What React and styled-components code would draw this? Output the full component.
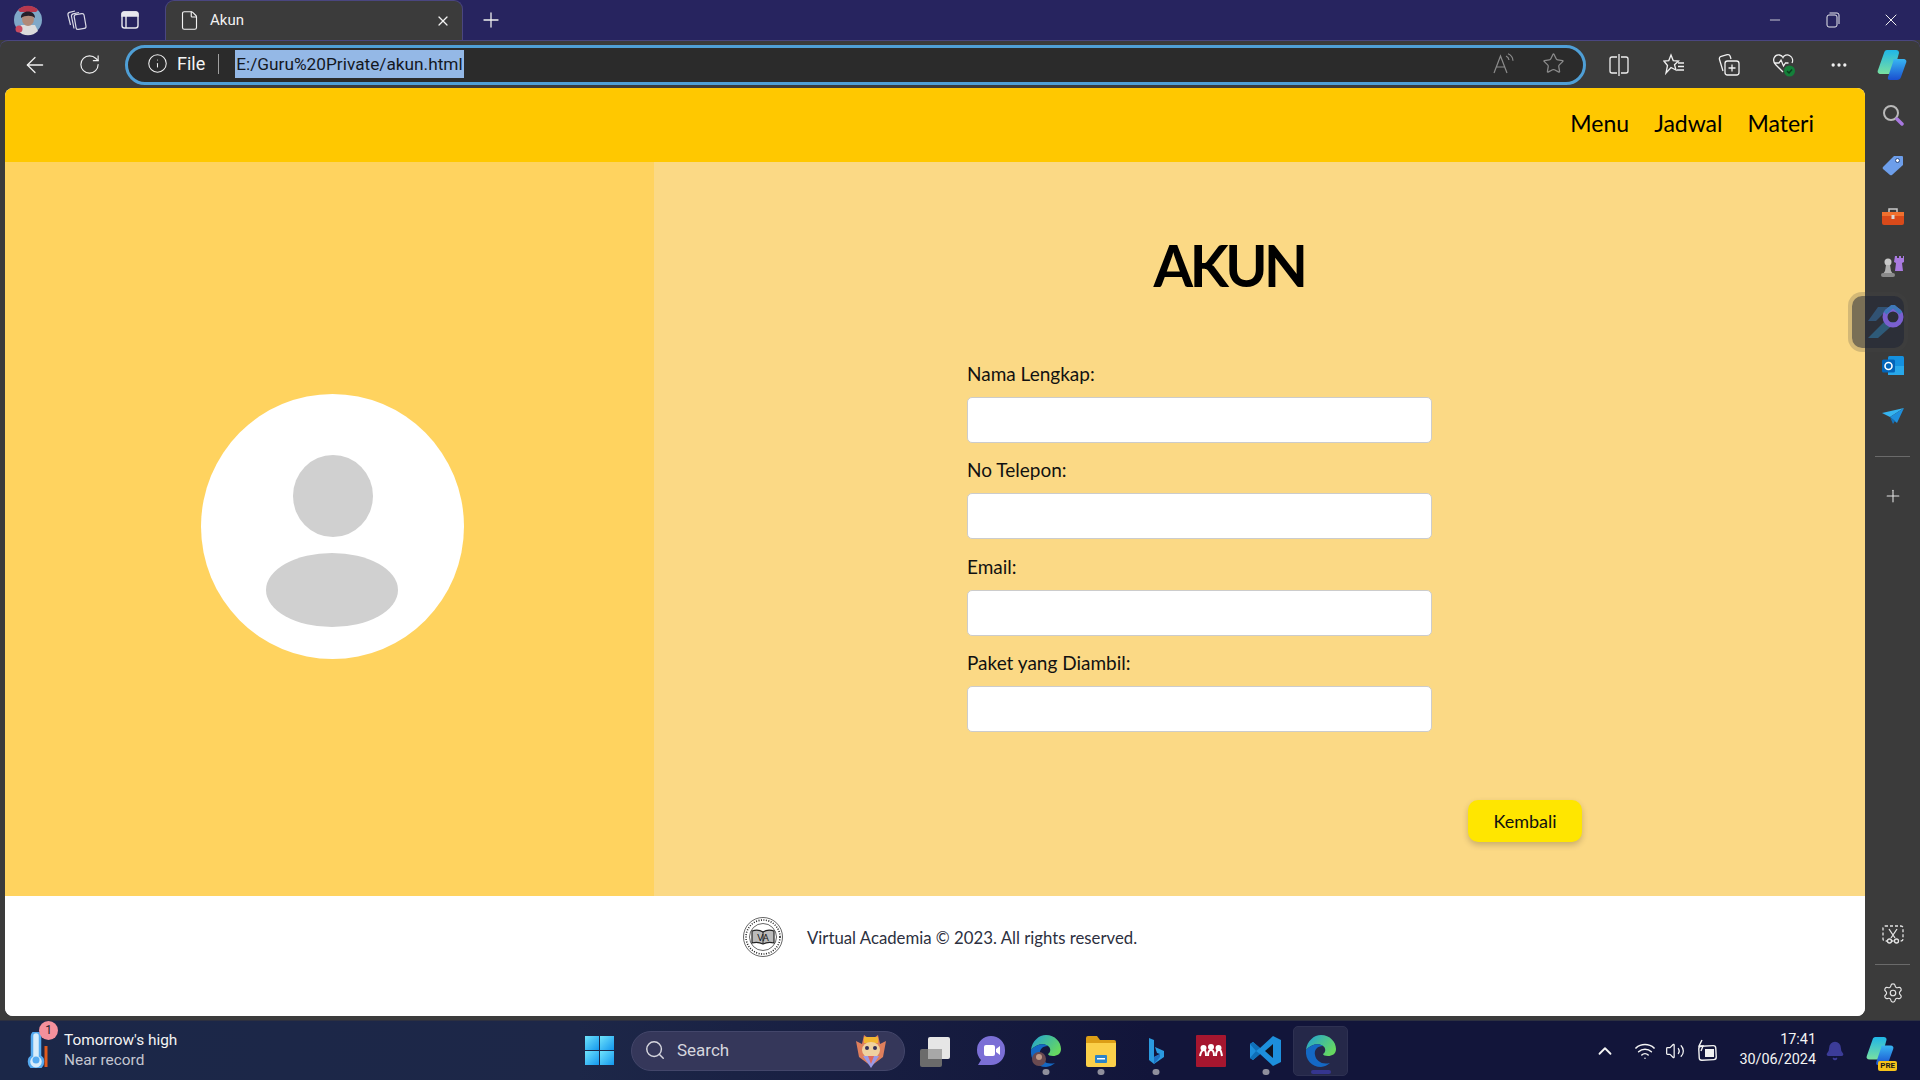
import React from "react";
import styled, { createGlobalStyle } from "styled-components";
import {
  ArrowLeft,
  Bell,
  ChevronUp,
  File,
  Info,
  Minus,
  MoreHorizontal,
  Plus,
  RotateCw,
  Search,
  Settings,
  Star,
  Volume2,
  Wifi,
  X,
} from "lucide-react";

const fields = ["Nama Lengkap:", "No Telepon:", "Email:", "Paket yang Diambil:"];

const ProfileIcon = () => (
  <svg width="30" height="32" viewBox="0 0 30 32">
    <circle cx="15" cy="16" r="14" fill="#7fa8c8" />
    <path d="M5 6a14 14 0 0 1 20 0l-2 2H7z" fill="#b8384e" />
    <path d="M5 27a14 14 0 0 0 20 0l-3-6H8z" fill="#dcdcdc" />
    <circle cx="6" cy="25" r="3.500" fill="#c84a60" />
    <ellipse cx="15" cy="15" rx="6" ry="7" fill="#b08a78" />
    <path d="M8 14c-1-8 14-9 14 0-3-3-10-3-14 0z" fill="#26202a" />
  </svg>
);

const WorkspacesIcon = () => (
  <svg width="24" height="24" viewBox="0 0 24 24" fill="none" stroke="#d8d8e4" strokeWidth="1.200">
    <rect x="10" y="6" width="10" height="15" rx="2" transform="rotate(-10 15 13)" />
    <path d="M9 20.500 6.500 8.500c-.2-1.300.4-2.300 1.600-2.600L14 4.500" />
    <path d="M5.500 17 3 7c-.3-1.300.3-2.200 1.500-2.600L10 3" />
  </svg>
);

const TabsIcon = () => (
  <svg width="20" height="20" viewBox="0 0 20 20" fill="none" stroke="#e8e8ee" strokeWidth="1.400">
    <rect x="2" y="2" width="16" height="16" rx="2.500" />
    <path d="M2 6h16V4.500a2.500 2.500 0 0 0-2.500-2.500h-11A2.500 2.500 0 0 0 2 4.500z" fill="#e8e8ee" />
    <path d="M6 6v12" />
  </svg>
);

const RestoreIcon = () => (
  <svg width="14" height="16" viewBox="0 0 14 16" fill="none" stroke="#e8e8ee" strokeWidth="1">
    <rect x="1" y="3" width="10" height="12" rx="2" />
    <path d="M3.500 1H11a2 2 0 0 1 2 2v9" />
  </svg>
);

const ReadAloudIcon = () => (
  <svg width="24" height="22" viewBox="0 0 24 22" fill="none" stroke="#8c8c8c" strokeWidth="1.200">
    <path d="M2 20 8.500 3 15 20M4.500 14h8" />
    <path d="M14 3a5 5 0 0 1 3 4M16 0.800a8 8 0 0 1 5 7" />
  </svg>
);

const SplitIcon = () => (
  <svg width="20" height="24" viewBox="0 0 20 24" fill="none" stroke="#f0f0f0" strokeWidth="1.300">
    <path d="M8 4H3a2 2 0 0 0-2 2v12a2 2 0 0 0 2 2h5M12 4h5a2 2 0 0 1 2 2v12a2 2 0 0 1-2 2h-5M10 1v22" />
  </svg>
);

const FavoritesIcon = () => (
  <svg width="22" height="24" viewBox="0 0 22 24" fill="none" stroke="#f0f0f0" strokeWidth="1.300">
    <path d="M8 2l2.200 5.600 5.300.4-4 3.800 1.500 5.200L8 14.500l-5 5.500 1.500-7.500L0.800 8l5-.4z" />
    <path d="M15 10h6M15 13.500h6M14 17h7" />
  </svg>
);

const CollectionsIcon = () => (
  <svg width="22" height="24" viewBox="0 0 22 24" fill="none" stroke="#f0f0f0" strokeWidth="1.300">
    <path d="M5 18 1.500 6.500c-.5-1.500.3-2.700 1.700-3.100l6-1.700c1.400-.4 2.500.1 3 1.500L13 6" />
    <rect x="7" y="8" width="14" height="14" rx="2.500" />
    <path d="M14 11.500v7M10.500 15h7" />
  </svg>
);

const HealthIcon = () => (
  <svg width="24" height="26" viewBox="0 0 24 26" fill="none" stroke="#f0f0f0" strokeWidth="1.300">
    <path d="M11 20 4 13C-1 8 3 2 7.500 3c2 .4 3 1.500 3.500 2.500C12 3.500 15 2 17.500 3.500 21 5.500 21 9 20 11" />
    <path d="M2 11h5l2-3 2.500 6 2-3h3" />
    <circle cx="17.500" cy="19" r="5.500" fill="#14803a" stroke="none" />
    <path d="M15 19l2 2 3-3.500" stroke="#0c3d1e" strokeWidth="1.500" />
  </svg>
);

const CopilotIcon = ({ size = 32, id = "cp" }) => (
  <svg width={size} height={size} viewBox="0 0 32 32">
    <defs>
      <linearGradient id={`${id}a`} x1="0" y1="0" x2="0" y2="1">
        <stop offset="0" stopColor="#1fb6e8" />
        <stop offset="1" stopColor="#79e0a0" />
      </linearGradient>
      <linearGradient id={`${id}b`} x1="0" y1="0" x2="0" y2="1">
        <stop offset="0" stopColor="#38b6f2" />
        <stop offset="1" stopColor="#1a4fd0" />
      </linearGradient>
    </defs>
    <path d="M11 1h9c2 0 3 1 3 3L18 22c-.5 2-2 3-4 3H5c-3 0-4-2-3-4l6-17c.5-2 1.500-3 3-3z" fill={`url(#${id}a)`} />
    <path d="M16 10h11c3 0 4 2 3 4l-5 14c-.5 2-2 3-4 3h-7c-2 0-2.500-1-2-3l5-15c.3-2 1-3 0-3z" fill={`url(#${id}b)`} />
  </svg>
);

const SearchToolIcon = () => (
  <svg width="22" height="22" viewBox="0 0 22 22" fill="none">
    <circle cx="9" cy="9" r="7" stroke="#b9b9b9" strokeWidth="2" />
    <path d="M15 15l5 5" stroke="#a878e0" strokeWidth="3.500" strokeLinecap="round" />
  </svg>
);

const TagIcon = () => (
  <svg width="22" height="22" viewBox="0 0 22 22">
    <path d="M1 13 12 2h8a1 1 0 0 1 1 1v8L10 21a2 2 0 0 1-2 0l-7-6a1.500 1.500 0 0 1 0-2z" fill="#6d9eea" />
    <circle cx="15.500" cy="6.500" r="2" fill="#fff" stroke="#2c4a80" />
  </svg>
);

const ToolboxIcon = () => (
  <svg width="22" height="18" viewBox="0 0 22 18">
    <path d="M7 5V2h8v3" fill="none" stroke="#c9c9c9" strokeWidth="1.500" />
    <rect x="0" y="5" width="22" height="13" rx="2" fill="#d94a1a" />
    <rect x="0" y="5" width="22" height="4" fill="#f0702e" />
    <rect x="9.500" y="8" width="3" height="4" fill="#d8d8d8" />
  </svg>
);

const ChessIcon = () => (
  <svg width="24" height="24" viewBox="0 0 24 24">
    <path d="M14 2h2v2h2V2h2v2h2V2h1v6l-2 1 1 8h-8l1-8-2-1z" fill="#a97ae0" />
    <circle cx="7" cy="8" r="3.500" fill="#c8c8c8" />
    <path d="M5 11h4l1 6 2 3H2l2-3z" fill="#b0b0b0" />
    <rect x="0" y="19" width="14" height="4" rx="2" fill="#8a8a8a" />
  </svg>
);

const DesignerIcon = () => (
  <svg width="38" height="34" viewBox="0 0 38 34">
    <path d="M12 2h12L10 16H2z" fill="#33587e" opacity="0.85" />
    <path d="M18 17h12L12 33H2z" fill="#2f6184" opacity="0.85" />
    <circle cx="27" cy="12" r="8" fill="none" stroke="#7a5fd0" strokeWidth="5" />
    <path d="M19 8l8-7 8 7" fill="none" stroke="#3e78b8" strokeWidth="4" />
  </svg>
);

const OutlookIcon = () => (
  <svg width="22" height="20" viewBox="0 0 22 20">
    <rect x="6" y="0" width="16" height="19" rx="1.500" fill="#1490df" />
    <path d="M6 10h16v9H6z" fill="#28a8ea" />
    <rect x="0" y="3.500" width="13" height="13" rx="1.500" fill="#0364b8" />
    <circle cx="6.500" cy="10" r="3.500" fill="none" stroke="#fff" strokeWidth="1.600" />
  </svg>
);

const SendIcon = () => (
  <svg width="22" height="16" viewBox="0 0 22 16">
    <path d="M0 5 22 0 8 9z" fill="#35b4f0" />
    <path d="M22 0 15 15 8 9z" fill="#1f8fdc" />
    <path d="M8 9 11 16 13 13z" fill="#1670b8" />
  </svg>
);

const ScreenshotIcon = () => (
  <svg width="22" height="20" viewBox="0 0 22 20" fill="none" stroke="#e4e4e4" strokeWidth="1.300">
    <rect x="1" y="1" width="20" height="15" rx="2" strokeDasharray="3 2" />
    <path d="M7 4l6 9M15 4l-6 9" />
    <circle cx="7.500" cy="16" r="2" fill="#3b3b3b" />
    <circle cx="14.500" cy="16" r="2" fill="#3b3b3b" />
  </svg>
);

const BookSeal = () => (
  <svg width="40" height="40" viewBox="0 0 40 40" fill="none" stroke="#222">
    <circle cx="20" cy="20" r="19.500" strokeWidth="0.700" />
    <circle cx="20" cy="20" r="17" strokeWidth="1.600" strokeDasharray="1 1.500" />
    <circle cx="20" cy="20" r="13.500" strokeWidth="0.700" />
    <path d="M9 26V14c4-1.500 8-1 11 1 3-2 7-2.500 11-1v12c-4-1-8-.5-11 1-3-1.500-7-2-11-1z" fill="#bbb" strokeWidth="1.200" />
    <path d="M20 15v12" strokeWidth="1" />
    <text x="20" y="24" textAnchor="middle" fontSize="9" fontFamily="Lato, sans-serif" fill="#111" stroke="none">VA</text>
  </svg>
);

const AvatarArt = () => (
  <svg width="263" height="265" viewBox="0 0 263 265">
    <ellipse cx="131.500" cy="132.500" rx="131.500" ry="132.500" fill="#fff" />
    <ellipse cx="132" cy="102" rx="40" ry="41" fill="#d0d0d0" />
    <ellipse cx="131" cy="196" rx="66" ry="37" fill="#d0d0d0" />
  </svg>
);

const ThermoIcon = () => (
  <svg width="26" height="36" viewBox="0 0 26 36" fill="none">
    <path d="M5 4a4 4 0 0 1 8 0v20a7 7 0 1 1-8 0z" fill="#d8ecfa" stroke="#55aaf0" strokeWidth="2.500" />
    <circle cx="9" cy="28" r="3.500" fill="#55aaf0" />
    <path d="M19 14v21" stroke="#e05a1c" strokeWidth="3" />
  </svg>
);

const WindowsLogo = () => (
  <svg width="29" height="29" viewBox="0 0 29 29">
    <defs>
      <linearGradient id="win" x1="0" y1="0" x2="1" y2="1">
        <stop offset="0" stopColor="#6fe3fb" />
        <stop offset="1" stopColor="#1397ee" />
      </linearGradient>
    </defs>
    <rect width="14" height="14" fill="url(#win)" />
    <rect x="15" width="14" height="14" fill="url(#win)" />
    <rect y="15" width="14" height="14" fill="url(#win)" />
    <rect x="15" y="15" width="14" height="14" fill="url(#win)" />
  </svg>
);

const MascotIcon = () => (
  <svg width="36" height="38" viewBox="0 0 36 38">
    <path d="M3 10l6 3 2-9 7 5 7-5 2 9 6-3-3 16-12 9-12-9z" fill="#df7f5c" />
    <rect x="11" y="6" width="14" height="6" fill="#f2b632" />
    <ellipse cx="18" cy="19" rx="9" ry="8" fill="#efd2a0" />
    <circle cx="14" cy="17" r="2" fill="#33305a" />
    <circle cx="22" cy="17" r="2" fill="#33305a" />
    <path d="M10 25h16l-8 12z" fill="#9a9ae6" />
    <path d="M15 25h6l-3 8z" fill="#e06a5c" />
  </svg>
);

const TaskViewIcon = () => (
  <svg width="32" height="32" viewBox="0 0 32 32">
    <rect x="0" y="14" width="22" height="18" rx="2" fill="#6b6b6b" />
    <rect x="8" y="2" width="22" height="22" rx="2" fill="#e6e6e6" />
    <rect x="8" y="14" width="14" height="10" fill="#a8a8a8" />
  </svg>
);

const MeetIcon = () => (
  <svg width="30" height="32" viewBox="0 0 30 32">
    <path d="M15 1a14 14 0 0 1 14 14v1a14 14 0 0 1-14 14H2l3-5a14 14 0 0 1-4-10v0A14 14 0 0 1 15 1z" fill="#7b6fd6" />
    <rect x="8" y="10" width="11" height="11" rx="2" fill="#fff" />
    <path d="M20 14l4-3v9l-4-3z" fill="#fff" />
  </svg>
);

const EdgeIcon = ({ id, size = 32, badge }) => (
  <svg width={size} height={size} viewBox="0 0 32 32">
    <defs>
      <linearGradient id={id} x1="0" y1="0" x2="1" y2="0.600">
        <stop offset="0" stopColor="#1fa0d8" />
        <stop offset="1" stopColor="#66d860" />
      </linearGradient>
    </defs>
    <path d="M1 15C2 6 9 0 16 0c9 0 15 7 15 14 0 5-4 7-8 7-3 0-5-1-5-2 3-2 3-6 0-8-4-3-12-2-17 4z" fill={`url(#${id})`} />
    <path d="M1 15c5-6 13-7 17-4-6 0-9 4-8 9 1 6 7 10 15 8a15 15 0 0 1-9 4C7 32 0 25 1 15z" fill="#1468c4" />
    {badge && <circle cx="9" cy="24" r="7" fill="#6a4a50" />}
    {badge && <circle cx="9" cy="22" r="3" fill="#c09a88" />}
  </svg>
);

const FolderIcon = () => (
  <svg width="30" height="32" viewBox="0 0 30 32">
    <path d="M0 3a2 2 0 0 1 2-2h9l3 4h14a2 2 0 0 1 2 2v6H0z" fill="#dc9e16" />
    <path d="M0 8h30v22a2 2 0 0 1-2 2H2a2 2 0 0 1-2-2z" fill="#fbd04a" />
    <rect x="9" y="20" width="12" height="8" rx="1" fill="#2b84c8" />
    <rect x="11" y="23" width="8" height="1.500" fill="#fff" />
  </svg>
);

const BingIcon = () => (
  <svg width="16" height="28" viewBox="0 0 16 28">
    <path d="M1 1l5 2v17l6-3-3-1-2-6 9 4v6L6 27l-5-4z" fill="#2a9adf" />
    <path d="M6 20l6-3v3l-6 7z" fill="#1d70c2" />
  </svg>
);

const MendeleyIcon = () => (
  <svg width="30" height="32" viewBox="0 0 30 32">
    <rect width="30" height="32" rx="1" fill="#a6162f" />
    <circle cx="15" cy="12" r="3" fill="#fff" />
    <circle cx="7.500" cy="13" r="3" fill="#fff" />
    <circle cx="22.500" cy="13" r="3" fill="#fff" />
    <path d="M4 21c1-5 2-6 4-6s2 4 2 6M12 21c0-5 1-6 3-6s3 1 3 6M20 21c0-5 1-6 3-6s2 1 3 6" stroke="#fff" strokeWidth="2" fill="none" />
  </svg>
);

const VsCodeIcon = () => (
  <svg width="32" height="32" viewBox="0 0 32 32">
    <path d="M23 1l8 4v22l-8 4L10 19 3 25l-3-2v-14l3-2 7 6z" fill="#1d8fdc" />
    <path d="M23 9l-8 7 8 7z" fill="#11131f" />
    <path d="M0 9l3-2 7 6-4 3zM0 23l3 2 7-6-4-3z" fill="#0f6fb8" />
  </svg>
);

const BatteryIcon = () => (
  <svg width="24" height="24" viewBox="0 0 24 24" fill="none" stroke="#f2f2f2" strokeWidth="1.400">
    <rect x="3" y="7" width="17" height="14" rx="2.500" transform="rotate(-3 11 14)" />
    <rect x="9" y="10" width="9" height="8" fill="#f2f2f2" stroke="none" />
    <path d="M6 1 3 7h4L5 12" />
  </svg>
);

const GlobalStyle = createGlobalStyle`
  html, body {
    margin: 0;
    padding: 0;
    background: #3b3b3b;
    overflow: hidden;
  }
  * {
    box-sizing: border-box;
  }
`;

const Screen = styled.div`
  width: 1920px;
  height: 1080px;
  display: flex;
  flex-direction: column;
  background: #3b3b3b;
  font-family: "Lato", "Open Sans", sans-serif;
`;

const TitleBar = styled.div`
  height: 40px;
  flex: none;
  display: flex;
  align-items: stretch;
  background: #27245f;
`;

const Cell = styled.div`
  position: relative;
  width: ${(p) => p.$w || 55}px;
  flex: none;
  display: flex;
  align-items: center;
  justify-content: center;
  color: ${(p) => p.$color || "#f0f0f0"};
`;

const Tab = styled.div`
  width: 298px;
  margin-left: 3px;
  padding: 0 11px 0 13px;
  display: flex;
  align-items: center;
  background: #3b3b3b;
  border: 1px solid #4a4680;
  border-bottom: none;
  border-radius: 9px 9px 0 0;
  color: #f2f2f2;
  font-family: "Roboto", sans-serif;
  font-size: 15px;
`;

const TabTitle = styled.span`
  margin-left: 10px;
  padding-bottom: 2px;
  flex: 1;
`;

const Spacer = styled.div`
  flex: 1;
`;

const Toolbar = styled.div`
  height: 48px;
  flex: none;
  display: flex;
  align-items: center;
  padding-left: 7px;
  border-top: 1px solid #4a4680;
  border-radius: 8px 8px 0 0;
  background: #3b3b3b;
`;

const AddressBar = styled.div`
  flex: 1;
  height: 40px;
  margin-left: 8px;
  margin-right: 5px;
  display: flex;
  align-items: center;
  padding: 0 0 2px 19px;
  border: 3px solid #4f9fd6;
  border-radius: 20px;
  background: #2b2b2b;
  font-family: "Roboto", sans-serif;
`;

const FileLabel = styled.span`
  margin-left: 9px;
  color: #f4f4f4;
  font-size: 18px;
`;

const Divider = styled.span`
  width: 1px;
  height: 20px;
  margin: 0 16px 0 13px;
  background: #a0a0a0;
`;

const SelectedUrl = styled.span`
  height: 28px;
  padding: 0 1px;
  background: #94b8e6;
  color: #14181f;
  font-size: 17.25px;
  line-height: 28px;
`;

const BarActions = styled.div`
  margin-left: auto;
  display: flex;
  align-items: center;
  gap: 26px;
  padding-right: 18px;
`;

const Middle = styled.div`
  height: 928px;
  flex: none;
  display: flex;
`;

const Page = styled.main`
  width: 1860px;
  margin-left: 5px;
  display: flex;
  flex-direction: column;
  overflow: hidden;
  border-radius: 8px;
  background: #fff;
`;

const Nav = styled.nav`
  height: 74px;
  flex: none;
  display: flex;
  align-items: center;
  justify-content: flex-end;
  gap: 25px;
  padding: 0 51px 4px 0;
  background: #ffc800;
`;

const NavLink = styled.a`
  color: #000;
  font-size: 23px;
  line-height: 1;
`;

const Content = styled.div`
  height: 734px;
  flex: none;
  display: flex;
`;

const AvatarPanel = styled.section`
  width: 649px;
  flex: none;
  display: flex;
  align-items: center;
  justify-content: center;
  padding: 0 0 5px 6px;
  background: #ffd35f;
`;

const AccountPanel = styled.section`
  flex: 1;
  padding: 73px 0 0 313px;
  background: #fbd985;
`;

const Heading = styled.h1`
  width: 524px;
  margin: 0 0 67px;
  color: #000;
  font-size: 57px;
  font-weight: 700;
  line-height: 60px;
  letter-spacing: -3.5px;
  text-align: center;
`;

const Form = styled.form`
  width: 465px;
  display: flex;
  flex-direction: column;
  gap: 15.4px;
`;

const Field = styled.label`
  display: flex;
  flex-direction: column;
  gap: 11px;
  color: #111;
  font-size: 19px;
  line-height: 24px;
`;

const Input = styled.input`
  width: 100%;
  height: 46px;
  border: 1px solid #cccccc;
  border-radius: 5px;
  background: #fff;
`;

const BackButton = styled.button`
  display: block;
  width: 114px;
  height: 42px;
  margin: 68px 0 0 501px;
  border: none;
  border-radius: 10px;
  background: #ffe600;
  box-shadow: 0 3px 6px rgba(0, 0, 0, 0.2);
  color: #111;
  font-family: inherit;
  font-size: 18px;
`;

const Footer = styled.footer`
  flex: 1;
  display: flex;
  align-items: flex-start;
  gap: 24px;
  padding: 21px 0 0 738px;
  background: #fff;
`;

const FooterText = styled.p`
  margin: 0;
  color: #2c3040;
  font-size: 16.75px;
  line-height: 42px;
`;

const SideBar = styled.aside`
  width: 55px;
  flex: none;
  position: relative;
  display: flex;
  flex-direction: column;
  align-items: center;
  padding-top: 2px;
`;

const SideButton = styled.div`
  width: 55px;
  height: ${(p) => p.$h || 50}px;
  flex: none;
  display: flex;
  align-items: center;
  justify-content: center;
  color: #e4e4e4;
`;

const SideRule = styled.div`
  width: 35px;
  height: 1px;
  flex: none;
  margin: ${(p) => p.$m || "0"};
  background: #6a6a6a;
`;

const FloatingTile = styled.div`
  position: absolute;
  top: 204px;
  right: 12px;
  width: 60px;
  height: 60px;
  display: flex;
  align-items: center;
  justify-content: center;
  padding-left: 13px;
  border: 4px solid rgba(70, 70, 70, 0.22);
  border-radius: 14px;
  background: rgba(35, 40, 55, 0.6);
  background-clip: padding-box;
`;

const Taskbar = styled.div`
  height: 60px;
  margin-top: 4px;
  flex: none;
  display: flex;
  align-items: center;
  border-top: 1px solid #2d3040;
  background: linear-gradient(90deg, #1b2748 0%, #1d2748 30%, #12153a 60%, #12153a 100%);
  font-family: "Roboto", sans-serif;
`;

const Weather = styled.div`
  position: relative;
  width: 585px;
  flex: none;
  display: flex;
  align-items: center;
  padding: 0 0 2px 27px;
`;

const Badge = styled.span`
  position: absolute;
  top: -9px;
  left: 39px;
  width: 19px;
  height: 19px;
  border-radius: 50%;
  background: #f4909c;
  color: #20202e;
  font-size: 12px;
  line-height: 19px;
  text-align: center;
`;

const WeatherText = styled.div`
  margin-left: 11px;
  font-size: 15.4px;
  line-height: 20px;
  color: #f4f4f4;
`;

const Muted = styled.div`
  color: #c4c6d0;
`;

const SearchBox = styled.div`
  width: 274px;
  height: 40px;
  margin-left: 17px;
  flex: none;
  display: flex;
  align-items: center;
  padding: 0 15px 2px 12px;
  border: 1px solid #43466a;
  border-radius: 20px;
  background: #35375a;
  color: #d6d6de;
  font-size: 17px;
`;

const SearchLabel = styled.span`
  margin-left: 11px;
  flex: 1;
`;

const AppList = styled.div`
  margin-left: 3px;
  display: flex;
  align-items: center;
`;

const AppCell = styled.div`
  position: relative;
  width: 55px;
  height: 50px;
  display: flex;
  align-items: center;
  justify-content: center;
  border-radius: 5px;
  ${(p) => p.$active && "background: #252849; border: 1px solid #2e3152;"}

  &::after {
    content: "";
    position: absolute;
    bottom: 1px;
    left: 50%;
    display: ${(p) => (p.$running || p.$active ? "block" : "none")};
    width: ${(p) => (p.$active ? 20 : 7)}px;
    height: ${(p) => (p.$active ? 4 : 6)}px;
    border-radius: 3px;
    transform: translateX(-50%);
    background: ${(p) => (p.$active ? "#35358f" : "#8f8f9c")};
  }
`;

const Tray = styled.div`
  margin-left: auto;
  display: flex;
  align-items: center;
  padding-right: 25px;
  color: #f4f4f4;
`;

const TrayIcon = styled.div`
  width: ${(p) => p.$w || 30}px;
  display: flex;
  justify-content: center;
`;

const Clock = styled.div`
  margin-left: 8px;
  padding-bottom: 2px;
  font-size: 14.4px;
  line-height: 20px;
  text-align: right;
`;

const PreBadge = styled.span`
  position: absolute;
  right: -2px;
  bottom: -5px;
  padding: 0 2px;
  border-radius: 2px;
  background: #f6c21a;
  color: #1a1a1a;
  font-size: 8px;
  font-weight: 700;
  line-height: 10px;
`;

const CopilotTray = styled.div`
  position: relative;
  margin-left: 11px;
  display: flex;
`;

const Navigation = () => (
  <Nav>
    <NavLink>Menu</NavLink>
    <NavLink>Jadwal</NavLink>
    <NavLink>Materi</NavLink>
  </Nav>
);

const App = () => {
  return (
    <Screen>
      <GlobalStyle />
      <TitleBar>
        <Cell $w={56}><ProfileIcon /></Cell>
        <Cell $w={42}><WorkspacesIcon /></Cell>
        <Cell $w={64}><TabsIcon /></Cell>
        <Tab>
          <File size={21} strokeWidth={1.3} />
          <TabTitle>Akun</TabTitle>
          <X size={16} strokeWidth={1.8} />
        </Tab>
        <Cell $w={56}><Plus size={24} strokeWidth={1.3} /></Cell>
        <Spacer />
        <Cell $w={58}><Minus size={16} strokeWidth={1.2} /></Cell>
        <Cell $w={58}><RestoreIcon /></Cell>
        <Cell $w={58}><X size={20} strokeWidth={1.2} /></Cell>
      </TitleBar>
      <Toolbar>
        <Cell><ArrowLeft size={26} strokeWidth={1.2} /></Cell>
        <Cell><RotateCw size={23} strokeWidth={1.2} /></Cell>
        <AddressBar>
          <Info size={21} strokeWidth={1.2} color="#f0f0f0" />
          <FileLabel>File</FileLabel>
          <Divider />
          <SelectedUrl>E:/Guru%20Private/akun.html</SelectedUrl>
          <BarActions>
            <ReadAloudIcon />
            <Star size={23} strokeWidth={1.3} color="#8c8c8c" />
          </BarActions>
        </AddressBar>
        <Cell><SplitIcon /></Cell>
        <Cell><FavoritesIcon /></Cell>
        <Cell><CollectionsIcon /></Cell>
        <Cell><HealthIcon /></Cell>
        <Cell><MoreHorizontal size={20} strokeWidth={2} /></Cell>
        <Cell $w={52}><CopilotIcon id="cpa" /></Cell>
        <Cell $w={2} />
      </Toolbar>
      <Middle>
        <Page>
          <Navigation />
          <Content>
            <AvatarPanel>
              <AvatarArt />
            </AvatarPanel>
            <AccountPanel>
              <Heading>AKUN</Heading>
              <Form>
                {fields.map((field) => (
                  <Field key={field}>
                    {field}
                    <Input type="text" />
                  </Field>
                ))}
              </Form>
              <BackButton type="button">Kembali</BackButton>
            </AccountPanel>
          </Content>
          <Footer>
            <BookSeal />
            <FooterText>Virtual Academia © 2023. All rights reserved.</FooterText>
          </Footer>
        </Page>
        <SideBar>
          <SideButton><SearchToolIcon /></SideButton>
          <SideButton $h={50}><TagIcon /></SideButton>
          <SideButton $h={51}><ToolboxIcon /></SideButton>
          <SideButton><ChessIcon /></SideButton>
          <SideButton $h={50} />
          <SideButton $h={50}><OutlookIcon /></SideButton>
          <SideButton $h={50}><SendIcon /></SideButton>
          <SideRule $m="15px 0 14px" />
          <SideButton $h={50}><Plus size={20} strokeWidth={1.3} /></SideButton>
          <Spacer />
          <SideButton $h={50}><ScreenshotIcon /></SideButton>
          <SideRule $m="4px 0 5px" />
          <SideButton $h={46}><Settings size={22} strokeWidth={1.3} /></SideButton>
          <FloatingTile><DesignerIcon /></FloatingTile>
        </SideBar>
      </Middle>
      <Taskbar>
        <Weather>
          <ThermoIcon />
          <Badge>1</Badge>
          <WeatherText>
            Tomorrow's high
            <Muted>Near record</Muted>
          </WeatherText>
        </Weather>
        <WindowsLogo />
        <SearchBox>
          <Search size={22} strokeWidth={1.6} />
          <SearchLabel>Search</SearchLabel>
          <MascotIcon />
        </SearchBox>
        <AppList>
          <AppCell><TaskViewIcon /></AppCell>
          <AppCell><MeetIcon /></AppCell>
          <AppCell $running><EdgeIcon id="edge1" badge /></AppCell>
          <AppCell $running><FolderIcon /></AppCell>
          <AppCell $running><BingIcon /></AppCell>
          <AppCell><MendeleyIcon /></AppCell>
          <AppCell $running><VsCodeIcon /></AppCell>
          <AppCell $active><EdgeIcon id="edge2" /></AppCell>
        </AppList>
        <Tray>
          <TrayIcon $w={40}><ChevronUp size={22} strokeWidth={2} /></TrayIcon>
          <TrayIcon $w={40}><Wifi size={22} strokeWidth={1.6} /></TrayIcon>
          <TrayIcon $w={20}><Volume2 size={20} strokeWidth={1.5} /></TrayIcon>
          <TrayIcon $w={46}><BatteryIcon /></TrayIcon>
          <Clock>
            17:41
            <div>30/06/2024</div>
          </Clock>
          <TrayIcon $w={38}><Bell size={20} fill="#3c3c98" color="#3c3c98" /></TrayIcon>
          <CopilotTray>
            <CopilotIcon size={30} id="cpb" />
            <PreBadge>PRE</PreBadge>
          </CopilotTray>
        </Tray>
      </Taskbar>
    </Screen>
  );
};

export default App;
